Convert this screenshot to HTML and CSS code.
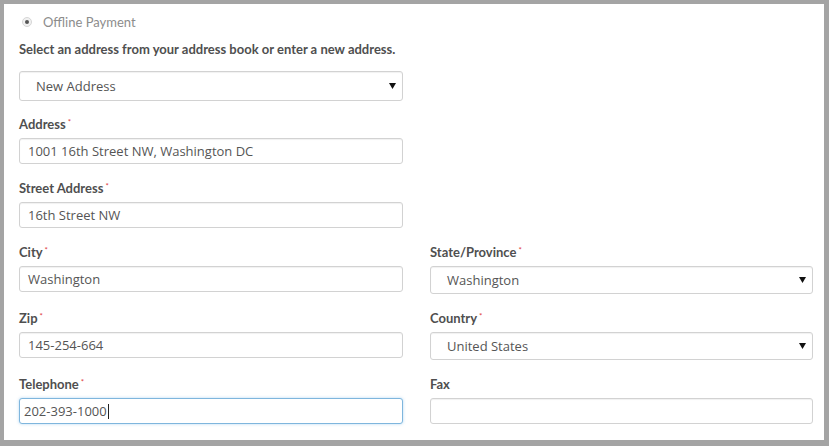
FILE: index.html
```html
<!DOCTYPE html>
<html lang="en">
<head>
<meta charset="utf-8">
<title>Billing Address</title>
<link rel="stylesheet" href="styles.css">
</head>
<body>
<div class="frame">
  <div class="payment">
    <span class="radio"><span class="dot"></span></span>
    <span class="payment-text">Offline Payment</span>
  </div>

  <div class="book-label">Select an address from your address book or enter a new address.</div>
  <div class="book-row">
    <div class="control select tall">
      <span class="value">New Address</span>
      <svg class="arrow" width="7" height="6" viewBox="0 0 7 6"><path d="M0 0H7L3.5 6Z" fill="#111"/></svg>
    </div>
  </div>

  <div class="grid">
    <div class="field">
      <div class="label">Address<span class="req">*</span></div>
      <div class="control"><span class="value">1001 16th Street NW, Washington DC</span></div>
    </div>
    <div></div>

    <div class="field">
      <div class="label">Street Address<span class="req">*</span></div>
      <div class="control"><span class="value">16th Street NW</span></div>
    </div>
    <div></div>

    <div class="field">
      <div class="label">City<span class="req">*</span></div>
      <div class="control"><span class="value">Washington</span></div>
    </div>
    <div class="field">
      <div class="label">State/Province<span class="req">*</span></div>
      <div class="control select">
        <span class="value">Washington</span>
        <svg class="arrow" width="7" height="6" viewBox="0 0 7 6"><path d="M0 0H7L3.5 6Z" fill="#111"/></svg>
      </div>
    </div>

    <div class="field">
      <div class="label">Zip<span class="req">*</span></div>
      <div class="control"><span class="value">145-254-664</span></div>
    </div>
    <div class="field">
      <div class="label">Country<span class="req">*</span></div>
      <div class="control select">
        <span class="value">United States</span>
        <svg class="arrow" width="7" height="6" viewBox="0 0 7 6"><path d="M0 0H7L3.5 6Z" fill="#111"/></svg>
      </div>
    </div>

    <div class="field">
      <div class="label">Telephone<span class="req">*</span></div>
      <div class="control focus"><span class="value">202-393-1000</span><span class="caret"></span></div>
    </div>
    <div class="field">
      <div class="label">Fax</div>
      <div class="control"></div>
    </div>
  </div>
</div>
</body>
</html>
```

FILE: styles.css
```css
html, body {
  margin: 0;
  padding: 0;
  background: #fff;
}

.frame {
  box-sizing: border-box;
  width: 829px;
  height: 446px;
  border-style: solid;
  border-color: #a4a4a4;
  border-width: 4px 5px 6px 4px;
  padding: 8px 11px 0 15px;
  background: #fff;
  font-family: "Open Sans", "Liberation Sans", sans-serif;
  color: #555;
}

.payment {
  display: flex;
  align-items: center;
  height: 20px;
  gap: 10px;
}

.radio {
  box-sizing: border-box;
  width: 10px;
  height: 10px;
  margin-left: 3px;
  border-radius: 50%;
  border: 1px solid #d6d6d6;
  background: #f1f1f1;
  display: flex;
  align-items: center;
  justify-content: center;
}

.dot {
  width: 4px;
  height: 4px;
  border-radius: 50%;
  background: #555;
}

.payment-text {
  font-family: "Lato", "Open Sans", sans-serif;
  font-weight: 400;
  font-size: 13px;
  line-height: 20px;
  color: #8c8c8c;
  margin-left: 1px;
}

.book-label,
.label {
  font-family: "Lato", "Open Sans", sans-serif;
  font-weight: 700;
  font-size: 13px;
  line-height: 16px;
  height: 16px;
  color: #4f4f4f;
}

.book-label {
  margin-top: 9px;
  margin-bottom: 14px;
}

.book-row {
  width: 384px;
  margin-bottom: 15px;
}

.grid {
  display: grid;
  grid-template-columns: 384px 383px;
  column-gap: 27px;
  row-gap: 16px;
  align-items: start;
}

.label {
  margin-bottom: 6px;
}

.req {
  position: relative;
  top: -4px;
  color: #e04040;
  font-size: 8px;
  line-height: 0;
  margin-left: 2px;
  font-weight: 400;
}

.control {
  box-sizing: border-box;
  height: 26px;
  border: 1px solid #d2d2d2;
  border-radius: 3px;
  box-shadow: inset 0 1px 1px rgba(0, 0, 0, 0.06);
  display: flex;
  align-items: center;
  padding: 0 8px;
  font-size: 13px;
  color: #555;
  background: #fff;
}

.control.select {
  height: 28px;
  padding-left: 16px;
  padding-right: 6px;
  justify-content: space-between;
}

.control.select.tall {
  height: 30px;
}

.arrow {
  flex: none;
}

.control.focus {
  border-color: #7fb6dd;
  box-shadow: 0 0 3px rgba(102, 175, 233, 0.5);
  padding-left: 4px;
}

.caret {
  display: inline-block;
  width: 1px;
  height: 15px;
  background: #222;
  margin-left: 1px;
}
```
